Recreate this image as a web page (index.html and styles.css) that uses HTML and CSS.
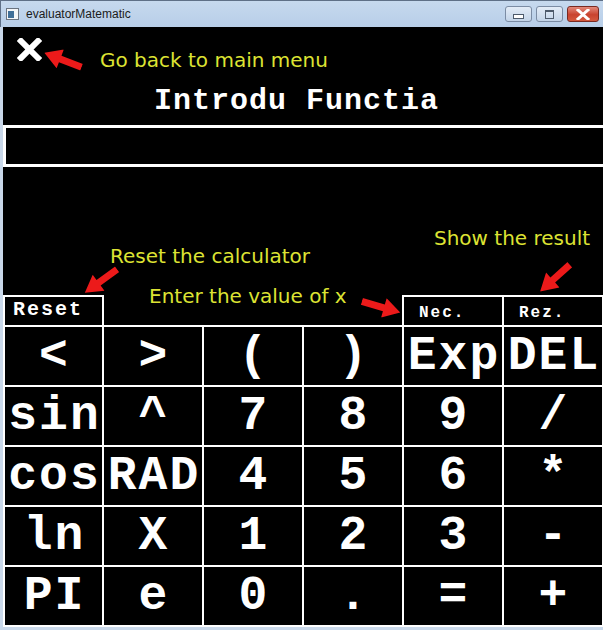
FILE: index.html
```html
<!DOCTYPE html>
<html>
<head>
<meta charset="utf-8">
<link rel="stylesheet" href="styles.css">
</head>
<body>
<div class="window">
  <div class="titlebar">
    <span class="app-icon"><span class="app-icon-mark"></span></span>
    <span class="title">evaluatorMatematic</span>
    <div class="controls">
      <span class="btn min"><span class="min-bar"></span></span>
      <span class="btn max"><span class="max-box"></span></span>
      <span class="btn close"><svg width="14" height="11" viewBox="0 0 14 11"><path d="M2 1 L12 10 M12 1 L2 10" stroke="#fff" stroke-width="3" stroke-linecap="square" fill="none"/></svg></span>
    </div>
  </div>
  <div class="client">
    <header class="head">
      <svg class="back-x" width="25" height="23" viewBox="0 0 25 23"><path d="M4 3 L21 20 M21 3 L4 20" stroke="#fff" stroke-width="6" stroke-linecap="square" fill="none"/></svg>
      <h1 class="heading">Introdu Functia</h1>
    </header>
    <div class="input"></div>
    <div class="spacer"></div>
    <div class="tabs">
      <div class="tab-reset">Reset</div>
      <div class="tab-group">
        <div class="tab-cell">Nec.</div>
        <div class="tab-cell">Rez.</div>
      </div>
    </div>
    <div class="keys">
      <div class="key">&lt;</div><div class="key">&gt;</div><div class="key">(</div><div class="key">)</div><div class="key">Exp</div><div class="key">DEL</div>
      <div class="key">sin</div><div class="key">^</div><div class="key">7</div><div class="key">8</div><div class="key">9</div><div class="key">/</div>
      <div class="key">cos</div><div class="key">RAD</div><div class="key">4</div><div class="key">5</div><div class="key">6</div><div class="key">*</div>
      <div class="key">ln</div><div class="key">X</div><div class="key">1</div><div class="key">2</div><div class="key">3</div><div class="key">-</div>
      <div class="key">PI</div><div class="key">e</div><div class="key">0</div><div class="key">.</div><div class="key">=</div><div class="key">+</div>
    </div>
  </div>
  <div class="bottom-frame"></div>
</div>

<div class="note note-back">Go back to main menu</div>
<div class="note note-reset">Reset the calculator</div>
<div class="note note-enter">Enter the value of x</div>
<div class="note note-show">Show the result</div>

<svg class="arrow arrow-back" viewBox="0 0 40 20"><polygon points="0,6.5 23,6.5 23,0 40,10 23,20 23,13.5 0,13.5" fill="#ec1a1a"/></svg>
<svg class="arrow arrow-reset" viewBox="0 0 40 20"><polygon points="0,6.5 23,6.5 23,0 40,10 23,20 23,13.5 0,13.5" fill="#ec1a1a"/></svg>
<svg class="arrow arrow-enter" viewBox="0 0 40 20"><polygon points="0,6.5 23,6.5 23,0 40,10 23,20 23,13.5 0,13.5" fill="#ec1a1a"/></svg>
<svg class="arrow arrow-show" viewBox="0 0 40 20"><polygon points="0,6.5 23,6.5 23,0 40,10 23,20 23,13.5 0,13.5" fill="#ec1a1a"/></svg>
</body>
</html>
```
FILE: styles.css
```css
html, body {
  margin: 0;
  padding: 0;
  background: #000;
}
body {
  width: 603px;
  height: 630px;
  overflow: hidden;
  position: relative;
}
.window {
  width: 603px;
  height: 630px;
  display: flex;
  flex-direction: column;
  overflow: hidden;
}
.titlebar {
  height: 27px;
  flex: none;
  box-sizing: border-box;
  display: flex;
  align-items: center;
  padding-left: 5px;
  background: linear-gradient(#c6d9ee, #b8cee8);
  border-top: 1px solid #5f7087;
  border-left: 1px solid #5f7087;
}
.app-icon {
  width: 13px;
  height: 12px;
  box-sizing: border-box;
  border: 1px solid #6b7480;
  background: #f4f6f8;
  display: flex;
  align-items: flex-end;
  padding: 0 0 1px 1px;
}
.app-icon-mark {
  width: 6px;
  height: 7px;
  background: #3f6f98;
}
.title {
  margin-left: 7px;
  font-family: "Liberation Sans", Arial, sans-serif;
  font-size: 12px;
  color: #1b1b1b;
}
.controls {
  margin-left: auto;
  margin-right: 4px;
  display: flex;
  gap: 4px;
  align-items: center;
}
.btn {
  height: 16px;
  box-sizing: border-box;
  border: 1px solid #7b8ca4;
  border-radius: 3px;
  display: flex;
  align-items: center;
  justify-content: center;
}
.min, .max {
  width: 27px;
  background: linear-gradient(#e3ecf7, #c3d4e8);
}
.min-bar {
  width: 9px;
  height: 3px;
  margin-top: 5px;
  border: 1px solid #4d5a6b;
  background: #fff;
}
.max-box {
  width: 7px;
  height: 6px;
  border: 1px solid #4d5a6b;
  border-top-width: 2px;
}
.close {
  width: 32px;
  border-color: #7a2a22;
  background: linear-gradient(#e38a7c, #c9432f 55%, #d45a3f);
}
.client {
  height: 600px;
  flex: none;
  border-left: 3px solid #c9d8ea;
  width: 601px;
  display: flex;
  flex-direction: column;
  overflow: hidden;
  background: #000;
}
.head {
  height: 98px;
  flex: none;
  box-sizing: border-box;
  padding-top: 11px;
}
.back-x {
  display: block;
  margin-left: 14px;
}
.heading {
  margin: 27px 0 0;
  text-align: center;
  font-family: "Liberation Mono", "Courier New", monospace;
  font-weight: bold;
  font-size: 30px;
  letter-spacing: 1px;
  line-height: 26px;
  color: #fff;
  padding-right: 14px;
}
.input {
  height: 42px;
  flex: none;
  box-sizing: border-box;
  border: 3px solid #fff;
  border-right: none;
}
.spacer {
  height: 128px;
  flex: none;
}
.tabs {
  height: 30px;
  flex: none;
  display: flex;
  justify-content: space-between;
}
.tab-reset {
  width: 101px;
  box-sizing: border-box;
  border: 2px solid #fff;
  border-bottom: none;
  padding: 2px 0 0 8px;
  font-family: "Liberation Mono", "Courier New", monospace;
  font-weight: bold;
  font-size: 20px;
  letter-spacing: 2px;
  line-height: 22px;
  color: #fff;
}
.tab-group {
  display: grid;
  grid-template-columns: 98px 98px;
  gap: 2px;
  padding: 2px 2px 0;
  background: #fff;
}
.tab-cell {
  background: #000;
  padding: 7px 0 0 15px;
  font-family: "Liberation Mono", "Courier New", monospace;
  font-weight: bold;
  font-size: 16px;
  letter-spacing: 2px;
  line-height: 18px;
  color: #fff;
}
.keys {
  flex: none;
  width: 597px;
  display: grid;
  grid-template-columns: 97px repeat(5, 98px);
  grid-auto-rows: 58px;
  gap: 2px;
  padding: 2px;
  background: #fff;
}
.key {
  background: #000;
  display: flex;
  align-items: center;
  justify-content: center;
  font-family: "Liberation Mono", "Courier New", monospace;
  font-weight: bold;
  font-size: 48px;
  letter-spacing: 2px;
  padding-left: 2px;
  color: #fff;
  white-space: nowrap;
  overflow: hidden;
}
.bottom-frame {
  height: 3px;
  flex: none;
  background: #c9d8ea;
}
.note {
  position: absolute;
  font-family: "DejaVu Sans", Verdana, sans-serif;
  font-size: 20px;
  line-height: 20px;
  color: #dde333;
  white-space: nowrap;
}
.note-back { left: 100px; top: 50px; }
.note-reset { left: 110px; top: 246px; }
.note-enter { left: 149px; top: 286px; }
.note-show { left: 434px; top: 228px; }
.arrow {
  position: absolute;
  width: 40px;
  height: 20px;
}
.arrow-back { left: 43px; top: 50px; transform: rotate(201deg); }
.arrow-reset { left: 81px; top: 271px; transform: rotate(144deg); }
.arrow-enter { left: 361px; top: 297px; transform: rotate(16deg); }
.arrow-show { left: 535px; top: 268px; transform: rotate(138deg); }
```
